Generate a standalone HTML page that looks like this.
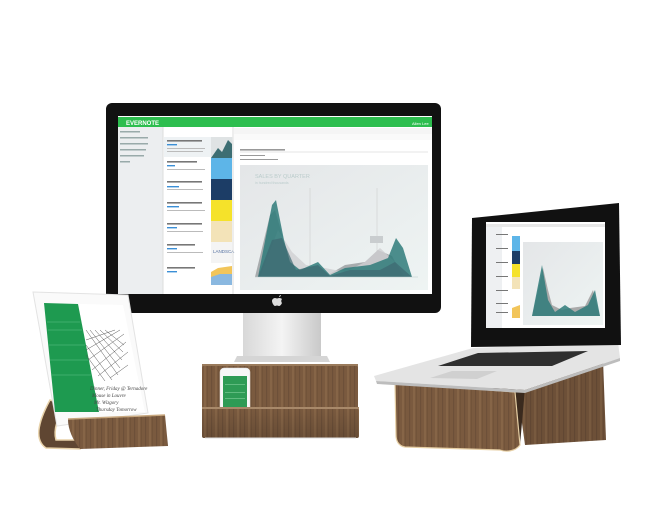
<!DOCTYPE html>
<html><head><meta charset="utf-8"><style>
html,body{margin:0;padding:0;background:#fff;}
svg{display:block;font-family:"Liberation Sans",sans-serif;}
</style></head><body>
<svg width="645" height="508" viewBox="0 0 645 508" xmlns="http://www.w3.org/2000/svg">
<defs>
<pattern id="grain" width="11" height="20" patternUnits="userSpaceOnUse">
<rect width="11" height="20" fill="#7a5a3f"/><rect x="2" width="1.2" height="20" fill="#5e4430" opacity=".45"/><rect x="6" width="2" height="20" fill="#94734f" opacity=".45"/><rect x="9" width=".8" height="20" fill="#5a412d" opacity=".35"/></pattern>
<linearGradient id="silver" x1="0" x2="1"><stop offset="0" stop-color="#d8d8d8"/><stop offset=".5" stop-color="#f4f4f4"/><stop offset="1" stop-color="#c9c9c9"/></linearGradient>
<linearGradient id="chartbg" x1="0" x2="1" y1="0" y2="1"><stop offset="0" stop-color="#e4e6e8"/><stop offset="1" stop-color="#eef4f3"/></linearGradient>
<linearGradient id="shade" x1="0" x2="0" y1="0" y2="1"><stop offset="0" stop-color="#000" stop-opacity="0"/><stop offset="1" stop-color="#000" stop-opacity=".15"/></linearGradient>
</defs>

<!-- Monitor -->
<rect x="106" y="103" width="335" height="210" rx="6" fill="#111"/>
<rect x="118" y="116" width="314" height="178" fill="#fff"/>
<rect x="118" y="117" width="314" height="10" fill="#2dbe4f"/>
<text x="126" y="125" font-size="6" fill="#fff" font-weight="bold">EVERNOTE</text>
<text x="412" y="125" font-size="4" fill="#fff">Allen Lee</text>
<rect x="118" y="127" width="45" height="167" fill="#eceef0"/>
<g fill="#9aa"><rect x="120" y="131" width="20" height="1.5"/><rect x="120" y="137" width="28" height="1.5"/><rect x="120" y="143" width="28" height="1.5"/><rect x="120" y="149" width="26" height="1.5"/><rect x="120" y="155" width="24" height="1.5"/><rect x="120" y="161" width="10" height="1.5"/></g>
<line x1="163" y1="127" x2="163" y2="294" stroke="#ddd"/>
<rect x="164" y="137" width="69" height="20" fill="#eef2f4"/>
<g fill="#777"><rect x="167" y="140" width="35" height="1.6"/><rect x="167" y="161" width="30" height="1.6"/><rect x="167" y="181" width="35" height="1.6"/><rect x="167" y="202" width="35" height="1.6"/><rect x="167" y="223" width="35" height="1.6"/><rect x="167" y="244" width="28" height="1.6"/><rect x="167" y="267" width="28" height="1.6"/></g>
<g fill="#3b8fd6"><rect x="167" y="144" width="10" height="1.4"/><rect x="167" y="165" width="8" height="1.4"/><rect x="167" y="186" width="12" height="1.4"/><rect x="167" y="206" width="12" height="1.4"/><rect x="167" y="227" width="10" height="1.4"/><rect x="167" y="248" width="10" height="1.4"/><rect x="167" y="271" width="10" height="1.4"/></g>
<g fill="#bbb"><rect x="167" y="148" width="38" height="1"/><rect x="167" y="151" width="36" height="1"/><rect x="167" y="169" width="38" height="1"/><rect x="167" y="189" width="36" height="1"/><rect x="167" y="210" width="38" height="1"/><rect x="167" y="231" width="36" height="1"/><rect x="167" y="252" width="36" height="1"/></g>
<rect x="211" y="137" width="21" height="21" fill="#dfe3e4"/>
<path d="M211 158 L218 148 L222 152 L228 140 L232 144 L232 158Z" fill="#3d6e73"/>
<rect x="211" y="158" width="21" height="21" fill="#5db5e8"/>
<rect x="211" y="179" width="21" height="21" fill="#1c3d66"/>
<rect x="211" y="200" width="21" height="21" fill="#f5e22a"/>
<rect x="211" y="221" width="21" height="21" fill="#f3e3b8"/>
<rect x="211" y="242" width="21" height="21" fill="#f4f4f4"/>
<text x="213" y="253" font-size="4.5" fill="#5570a0">LANDSCA</text>
<rect x="211" y="263" width="21" height="22" fill="#fff"/>
<path d="M211 285 L211 272 L218 268 L232 266 L232 285Z" fill="#f2c55a"/>
<path d="M211 285 L211 277 L220 274 L232 274 L232 285Z" fill="#8ab8e0"/>
<line x1="233" y1="127" x2="233" y2="294" stroke="#ddd"/>
<rect x="234" y="128" width="198" height="6" fill="#f5f5f5"/>
<rect x="234" y="134" width="198" height="6" fill="#fafafa"/>
<g fill="#999"><rect x="240" y="149" width="45" height="1.6"/><rect x="240" y="155" width="25" height="1"/><rect x="240" y="159" width="38" height="1"/></g>
<line x1="240" y1="152" x2="428" y2="152" stroke="#e5e5e5"/>
<rect x="240" y="165" width="188" height="125" fill="url(#chartbg)"/>
<text x="255" y="178" font-size="5.5" fill="#bcc">SALES BY QUARTER</text>
<text x="255" y="184" font-size="3.5" fill="#bcc">in hundred thousands</text>
<line x1="310" y1="188" x2="310" y2="277" stroke="#c8c8c8" stroke-width=".5"/>
<line x1="377" y1="188" x2="377" y2="277" stroke="#c8c8c8" stroke-width=".5"/>
<path d="M255 277 L270 215 L275 210 L290 262 L305 273 L328 275 L345 265 L365 262 L378 250 L392 256 L403 277Z" fill="#a8acae"/>
<path d="M260 277 L278 230 L292 252 L306 265 L325 268 L345 272 L365 262 L380 248 L395 262 L405 277Z" fill="#cfd0d2" opacity=".8"/>
<path d="M258 277 L272 205 L276 200 L284 240 L290 262 L300 270 L318 262 L330 275 L345 268 L370 265 L388 258 L396 238 L403 248 L412 277Z" fill="#2f7b7a" opacity=".85"/>
<path d="M258 277 L272 240 L282 238 L296 270 L318 265 L330 276 L350 270 L380 270 L395 262 L412 277Z" fill="#3d6870" opacity=".7"/>
<rect x="370" y="236" width="13" height="7" fill="#c9cdcf"/>
<line x1="255" y1="277" x2="418" y2="277" stroke="#bcc" stroke-width=".5"/>
<path d="M279 298 c2 0 3 1 3 1 c-1 1-1 3 0 4 c-1 2-2 3-3 3 c-1 0-1-.5-2-.5 c-1 0-1 .5-2 .5 c-1 0-3-3-3-5 c0-2 2-3 3-3 c1 0 1.5.5 2 .5z M279 297 c0-1 1-2 2-2 c0 1-1 2-2 2z" fill="#ddd"/>
<path d="M243 313 L321 313 L321 356 L243 356Z" fill="url(#silver)"/>
<path d="M237 356 L327 356 L330 362 L234 362Z" fill="#d5d5d5"/>

<!-- middle wood block -->
<rect x="202" y="364" width="156" height="74" rx="3" fill="url(#grain)"/>
<rect x="202" y="364" width="156" height="2" fill="#9a7b5c"/>
<rect x="220" y="368" width="30" height="44" rx="4" fill="#f7f7f7" stroke="#ddd" stroke-width=".5"/>
<rect x="223" y="376" width="24" height="35" fill="#2e9b55"/>
<g fill="#6cc38a"><rect x="225" y="384" width="20" height=".8"/><rect x="225" y="392" width="20" height=".8"/><rect x="225" y="398" width="20" height=".8"/></g>
<rect x="202" y="408" width="157" height="30" rx="2" fill="url(#grain)"/>
<rect x="202" y="408" width="157" height="30" rx="2" fill="url(#shade)"/>
<rect x="202" y="407" width="157" height="2" fill="#a8896a"/>
<line x1="205" y1="438" x2="356" y2="438" stroke="#ddd"/>

<!-- iPad stand curl -->
<path d="M50 400 C38 422 34 440 46 448 L80 449 L80 440 L56 440 C53 430 58 415 66 405Z" fill="#5f4632" stroke="#e8d2aa" stroke-width="1.5"/>
<path d="M33 292 L128 295 L148 413 L57 426 Z" fill="#fafafa" stroke="#e3e3e3"/>
<path d="M44 303 L123 305 L145 412 L55 412 Z" fill="#fff"/>
<path d="M44 303 L78 304 L99 412 L55 412 Z" fill="#1e9a50"/>
<g stroke="#5ec28a" stroke-width=".6"><line x1="47" y1="322" x2="80" y2="322"/><line x1="48" y1="330" x2="82" y2="330"/><line x1="49" y1="345" x2="85" y2="345"/><line x1="50" y1="360" x2="88" y2="360"/><line x1="52" y1="375" x2="91" y2="375"/></g>
<g stroke="#555" stroke-width=".5" fill="none">
<path d="M86 330 L118 375 M90 330 L120 368 M95 330 L122 360 M100 330 L123 352 M105 330 L124 345 M86 340 L115 330 M86 350 L120 330 M88 360 L124 334 M92 370 L126 342 M98 376 L128 352 M110 378 L128 365 M86 345 L112 380 M86 355 L105 381"/>
</g>
<g font-size="5" fill="#444" font-style="italic" font-family="Liberation Serif,serif"><text x="90" y="390">Dinner, Friday @ Ternadore</text><text x="92" y="397">Mouse in Louvre</text><text x="94" y="404">Mr. Wizgory</text><text x="96" y="411">Thursday Tomorrow</text></g>
<path d="M68 419 L165 415 L168 446 L80 449 C73 440 68 430 68 419Z" fill="url(#grain)"/>
<path d="M68 419 L165 415" stroke="#c8a87f" stroke-width="1.5"/>

<!-- Laptop stand -->
<path d="M515 372 L603 360 L606 440 L525 445Z" fill="url(#grain)"/>
<path d="M515 372 L603 360 L606 440 L525 445Z" fill="#000" opacity=".1"/>
<path d="M492 385 L525 388 L520 445 L498 445Z" fill="#3a2a1e"/>
<path d="M395 383 L515 392 L520 445 C515 452 505 452 500 450 L405 447 C398 446 396 440 396 435Z" fill="url(#grain)" stroke="#e6cfa5" stroke-width="1.2"/>
<path d="M473 348 L618 342 L620 358 L525 390 L376 381 L374 376Z" fill="#e4e4e4"/>
<path d="M376 381 L525 390 L620 358 L620 361 L525 393 L377 384Z" fill="#bdbdbd"/>
<path d="M438 366 L478 353 L588 351 L552 366Z" fill="#2f2f2f"/>
<path d="M430 378 L452 371 L497 371 L477 379Z" fill="#d0d0d0"/>
<path d="M472 218 L619 203 L621 345 L471 347Z" fill="#111"/>
<path d="M486 222 L605 222 L605 328 L486 328Z" fill="#fff"/>
<rect x="486" y="224" width="119" height="3" fill="#e8e8e8"/>
<rect x="486" y="227" width="16" height="101" fill="#eef0f2"/>
<g fill="#777"><rect x="496" y="234" width="12" height="1"/><rect x="496" y="248" width="12" height="1"/><rect x="496" y="262" width="12" height="1"/><rect x="496" y="276" width="12" height="1"/><rect x="496" y="290" width="12" height="1"/><rect x="496" y="303" width="12" height="1"/><rect x="496" y="312" width="12" height="1"/></g>
<rect x="512" y="236" width="8" height="15" fill="#5db5e8"/>
<rect x="512" y="251" width="8" height="13" fill="#1c3d66"/>
<rect x="512" y="264" width="8" height="13" fill="#f5e22a"/>
<rect x="512" y="277" width="8" height="12" fill="#f3e3b8"/>
<path d="M512 318 L512 308 L520 305 L520 318Z" fill="#f2c55a"/>
<rect x="523" y="242" width="80" height="83" fill="url(#chartbg)"/>
<path d="M532 316 L543 268 L548 290 L552 305 L562 310 L570 308 L585 306 L593 290 L600 316Z" fill="#aaa"/>
<path d="M532 316 L542 265 L548 300 L555 312 L565 305 L575 312 L588 305 L595 290 L600 316Z" fill="#2f7b7a" opacity=".85"/>
</svg>
</body></html>
